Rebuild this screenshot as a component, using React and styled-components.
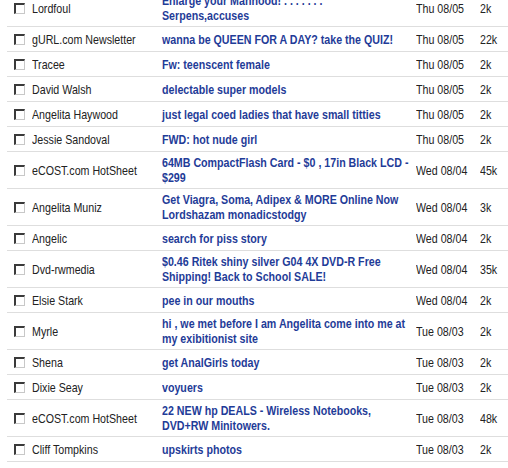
import React from "react";
import styled, { createGlobalStyle } from "styled-components";

const GlobalStyle = createGlobalStyle`
  body {
    margin: 0;
    background: #fff;
    font-family: "Liberation Sans", Arial, sans-serif;
  }
`;

const messages = [
  { from: "Lordfoul", subject: ["Enlarge your Manhood! . . . . . . .", "Serpens,accuses"], date: "Thu 08/05", size: "2k" },
  { from: "gURL.com Newsletter", subject: ["wanna be QUEEN FOR A DAY? take the QUIZ!"], date: "Thu 08/05", size: "22k" },
  { from: "Tracee", subject: ["Fw: teenscent female"], date: "Thu 08/05", size: "2k" },
  { from: "David Walsh", subject: ["delectable super models"], date: "Thu 08/05", size: "2k" },
  { from: "Angelita Haywood", subject: ["just legal coed ladies that have small titties"], date: "Thu 08/05", size: "2k" },
  { from: "Jessie Sandoval", subject: ["FWD: hot nude girl"], date: "Thu 08/05", size: "2k" },
  { from: "eCOST.com HotSheet", subject: ["64MB CompactFlash Card - $0 , 17in Black LCD -", "$299"], date: "Wed 08/04", size: "45k" },
  { from: "Angelita Muniz", subject: ["Get Viagra, Soma, Adipex & MORE Online Now", "Lordshazam monadicstodgy"], date: "Wed 08/04", size: "3k" },
  { from: "Angelic", subject: ["search for piss story"], date: "Wed 08/04", size: "2k" },
  { from: "Dvd-rwmedia", subject: ["$0.46 Ritek shiny silver G04 4X DVD-R Free", "Shipping! Back to School SALE!"], date: "Wed 08/04", size: "35k" },
  { from: "Elsie Stark", subject: ["pee in our mouths"], date: "Wed 08/04", size: "2k" },
  { from: "Myrle", subject: ["hi , we met before I am Angelita come into me at", "my exibitionist site"], date: "Tue 08/03", size: "2k" },
  { from: "Shena", subject: ["get AnalGirls today"], date: "Tue 08/03", size: "2k" },
  { from: "Dixie Seay", subject: ["voyuers"], date: "Tue 08/03", size: "2k" },
  { from: "eCOST.com HotSheet", subject: ["22 NEW hp DEALS - Wireless Notebooks,", "DVD+RW Minitowers."], date: "Tue 08/03", size: "48k" },
  { from: "Cliff Tompkins", subject: ["upskirts photos"], date: "Tue 08/03", size: "2k" },
];

const List = styled.div`
  margin: -10px 0 0 7px;
  display: flex;
  flex-direction: column;
`;

const Row = styled.div`
  display: grid;
  grid-template-columns: 21px 130px 254px 64px 1fr;
  align-items: center;
  padding: 3px 0;
  min-height: 18px;
  border-bottom: 1px solid #dedede;
  font-size: 13px;
  line-height: 15px;
`;

const CheckCell = styled.div`
  display: flex;
  align-items: center;
  padding-left: 7px;
`;

const Check = styled.span`
  width: 8px;
  height: 8px;
  background: #fff;
  border-style: solid;
  border-width: 2px 1px 1px 2px;
  border-color: #3a3a3a #c8c8c8 #c8c8c8 #3a3a3a;
`;

const Cell = styled.div`
  padding-left: 4px;
  overflow: visible;
  color: ${(p) => (p.$link ? "#1f3c98" : "#222")};
  font-weight: ${(p) => (p.$link ? "bold" : "normal")};
`;

/* Arial Narrow is not installed: squeeze Liberation Sans to its width */
const Narrow = styled.span`
  display: block;
  width: max-content;
  white-space: nowrap;
  transform: scaleX(0.82);
  transform-origin: left center;
`;

export default function App() {
  return (
    <>
      <GlobalStyle />
      <List>
        {messages.map((m, i) => (
          <Row key={i}>
            <CheckCell>
              <Check />
            </CheckCell>
            <Cell>
              <Narrow>{m.from}</Narrow>
            </Cell>
            <Cell $link>
              {m.subject.map((l, j) => (
                <Narrow key={j}>{l}</Narrow>
              ))}
            </Cell>
            <Cell>
              <Narrow>{m.date}</Narrow>
            </Cell>
            <Cell>
              <Narrow>{m.size}</Narrow>
            </Cell>
          </Row>
        ))}
      </List>
    </>
  );
}
